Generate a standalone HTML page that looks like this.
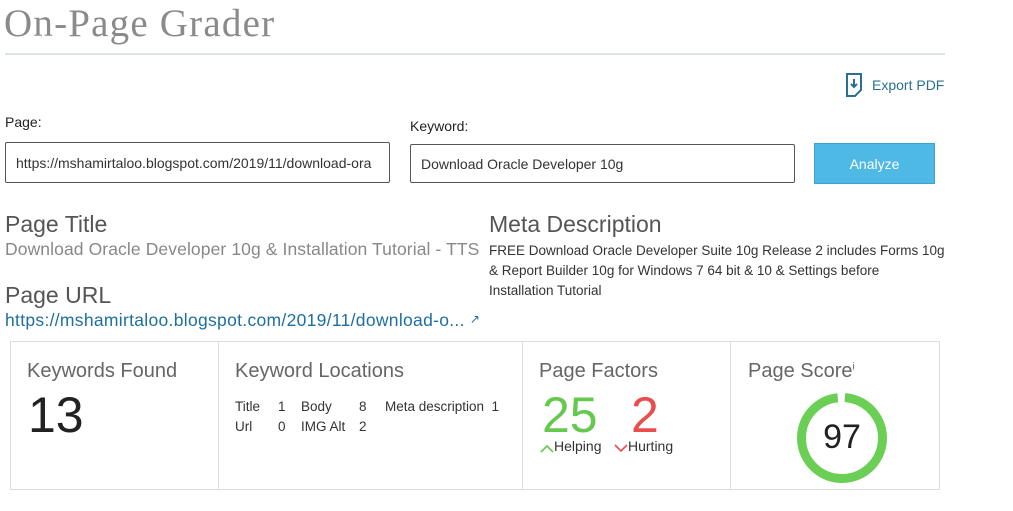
<!DOCTYPE html>
<html><head><style>
body{margin:0;width:1013px;height:511px;background:#fff;font-family:"Liberation Sans",sans-serif;position:relative;overflow:hidden}
.a{position:absolute;white-space:nowrap}
.inp{position:absolute;border:1px solid #555;border-radius:2px;box-sizing:border-box;font-size:13px;color:#333;padding-left:10px;display:flex;align-items:center}
.h{font-size:20px;color:#666}
.card{position:absolute;top:341px;height:149px;border-left:1px solid #ddd;box-sizing:border-box}
</style></head><body>
<div class="a" style="left:4px;top:1px;font-family:'Liberation Serif',serif;font-size:39px;letter-spacing:1.2px;color:#8a8a8a">On-Page Grader</div>
<div class="a" style="left:5px;top:53px;width:940px;height:2px;background:#dde4e4"></div>
<svg class="a" style="left:845px;top:73px" width="18" height="24" viewBox="0 0 18 24"><path d="M2 1h14v16l-6 6H2z" fill="none" stroke="#2a6f93" stroke-width="2"/><path d="M9 6v8M6 11l3 3 3-3" fill="none" stroke="#2a6f93" stroke-width="2"/></svg>
<div class="a" style="left:872px;top:77px;font-size:14px;color:#2a6f93">Export PDF</div>
<div class="a" style="left:5px;top:114px;font-size:14px;color:#222">Page:</div>
<div class="inp" style="left:5px;top:142px;width:385px;height:41px;font-size:14px">https://mshamirtaloo.blogspot.com/2019/11/download-ora</div>
<div class="a" style="left:410px;top:118px;font-size:14px;color:#222">Keyword:</div>
<div class="inp" style="left:410px;top:144px;width:385px;height:39px;font-size:14px">Download Oracle Developer 10g</div>
<div class="a" style="left:814px;top:143px;width:121px;height:41px;background:#4fb9e6;border:1px solid #3aa3d2;box-sizing:border-box;color:#fff;font-size:14px;display:flex;align-items:center;justify-content:center">Analyze</div>
<div class="a" style="left:5px;top:211px;font-size:23px;color:#555">Page Title</div>
<div class="a" style="left:5px;top:239px;font-size:17.5px;letter-spacing:0.1px;color:#888">Download Oracle Developer 10g &amp; Installation Tutorial - TTS</div>
<div class="a" style="left:5px;top:282px;font-size:23px;color:#555">Page URL</div>
<div class="a" style="left:5px;top:310px;font-size:17.5px;letter-spacing:0.3px;color:#1e6f9f">https://mshamirtaloo.blogspot.com/2019/11/download-o... <span style="font-size:12px;vertical-align:3px">&#x2197;</span></div>
<div class="a" style="left:489px;top:211px;font-size:23px;color:#555">Meta Description</div>
<div class="a" style="left:489px;top:241px;font-size:13.5px;color:#333;line-height:20px">FREE Download Oracle Developer Suite 10g Release 2 includes Forms 10g<br>&amp; Report Builder 10g for Windows 7 64 bit &amp; 10 &amp; Settings before<br>Installation Tutorial</div>
<div class="a" style="left:10px;top:341px;width:930px;height:149px;border:1px solid #ddd;box-sizing:border-box"></div>
<div class="card" style="left:218px;width:1px"></div><div class="card" style="left:522px;width:1px"></div><div class="card" style="left:730px;width:1px"></div>
<div class="a h" style="left:27px;top:360px">Keywords Found</div>
<div class="a" style="left:28px;top:386px;font-size:50px;color:#222">13</div>
<div class="a h" style="left:235px;top:360px">Keyword Locations</div>
<div class="a" style="left:235px;top:397px;font-size:13.5px;color:#333;line-height:20px">
<span style="display:inline-block;width:43px">Title</span><span style="display:inline-block;width:23px">1</span><span style="display:inline-block;width:58px">Body</span><span style="display:inline-block;width:26px">8</span>Meta description&nbsp; 1<br>
<span style="display:inline-block;width:43px">Url</span><span style="display:inline-block;width:23px">0</span><span style="display:inline-block;width:58px">IMG Alt</span>2</div>
<div class="a h" style="left:539px;top:360px">Page Factors</div>
<div class="a" style="left:542px;top:386px;font-size:50px;color:#66c84f">25</div>
<div class="a" style="left:631px;top:386px;font-size:50px;color:#ea4d4d">2</div>
<svg class="a" style="left:540px;top:444px" width="14" height="9"><path d="M1 8l6-6 6 6" fill="none" stroke="#66c84f" stroke-width="1.6"/></svg>
<div class="a" style="left:554px;top:438px;font-size:14px;color:#333">Helping</div>
<svg class="a" style="left:614px;top:444px" width="14" height="9"><path d="M1 1l6 6 6-6" fill="none" stroke="#ea4d4d" stroke-width="1.6"/></svg>
<div class="a" style="left:628px;top:438px;font-size:14px;color:#333">Hurting</div>
<div class="a h" style="left:748px;top:360px">Page Score<sup style="font-size:10px">i</sup></div>
<svg class="a" style="left:796px;top:392px" width="92" height="92"><circle cx="46" cy="46" r="40.5" fill="none" stroke="#6ccf55" stroke-width="9" stroke-dasharray="247 8" transform="rotate(-86 46 46)"/></svg>
<div class="a" style="left:796px;top:418px;width:92px;text-align:center;font-size:34px;color:#222">97</div>
</body></html>
